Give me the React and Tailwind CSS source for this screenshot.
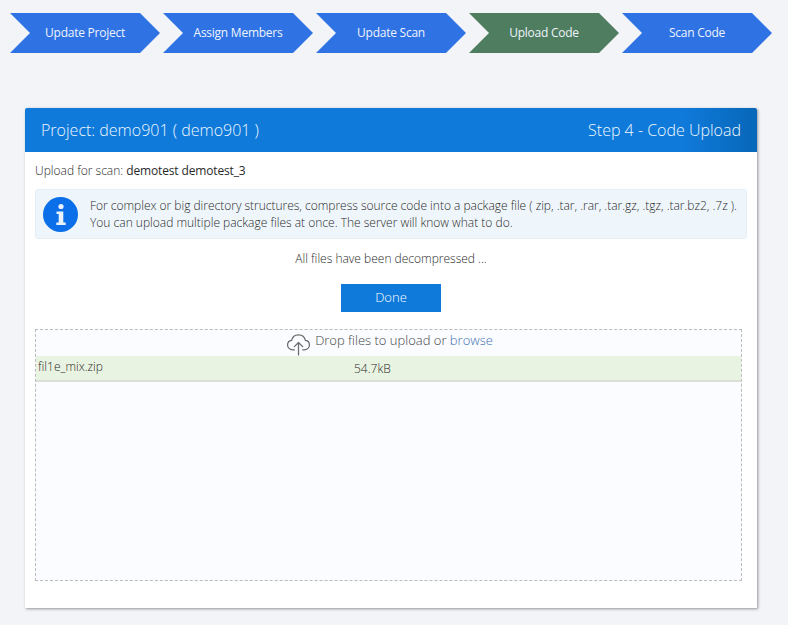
const steps = [
    { name: "Update Project", active: false },
    { name: "Assign Members", active: false },
    { name: "Update Scan", active: false },
    { name: "Upload Code", active: true },
    { name: "Scan Code", active: false },
];

function CloudUpload() {
    return (
        <svg width="25" height="25" viewBox="0 0 24 24" fill="none" stroke="#6b6b6b" strokeWidth="1.2" strokeLinecap="round" strokeLinejoin="round" className="mt-[1px] shrink-0">
            <path d="M8 18H6.500C3.600 18 1.500 16 1.500 13.500c0-2.300 1.700-4.100 3.900-4.400C6 5.900 8.600 3.600 12 3.600c3.300 0 6 2.300 6.600 5.500 2.200.3 3.900 2.100 3.900 4.400 0 2.500-2.100 4.500-5 4.500H16" />
            <path d="M12 23V11M8 15l4-4 4 4" />
        </svg>
    );
}

function InfoIcon() {
    return (
        <svg width="35" height="35" viewBox="0 0 35 35" className="shrink-0">
            <circle cx="17.500" cy="17.500" r="17.500" fill="#0a6fe8" />
            <circle cx="18" cy="9.500" r="2.600" fill="#eaf3fd" />
            <path d="M13.500 14.500h6.800v11h2.400v2.500h-9.400v-2.500h2.400v-8.500h-2.200z" fill="#eaf3fd" />
        </svg>
    );
}

export default function App() {
    return (
        <div className="h-[625px] w-[788px] overflow-hidden bg-[#f3f4f8] font-['Open_Sans',sans-serif] text-[12px] font-light text-[#2a2a2a]">
            <div className="flex gap-[3px] pl-[10px] pt-[13px]">
                {steps.map((step) => (
                    <div
                        key={step.name}
                        className={`flex h-[40px] w-[150px] items-center justify-center text-[12px] font-normal tracking-[-0.25px] text-[#eef4fc] [clip-path:polygon(0_0,130px_0,150px_20px,130px_40px,0_40px,20px_20px)] ${
                            step.active ? "bg-[#4f7d5f]" : "bg-[#2f72e4]"
                        }`}
                    >
                        {step.name}
                    </div>
                ))}
            </div>

            <div className="ml-[25px] mt-[55px] h-[500px] w-[732px] rounded-t-[2px] bg-white shadow-[1px_1px_3px_rgba(0,0,0,0.4)]">
                <div className="flex h-[44px] items-center justify-between rounded-t-[2px] bg-[linear-gradient(90deg,#0f7ada_0%,#0f7ada_90%,#0767b8_100%)] px-[16px] text-[16px] text-[#eef7ff]">
                    <span>Project: demo901 ( demo901 )</span>
                    <span>Step 4 - Code Upload</span>
                </div>

                <div className="px-[10px]">
                    <div className="flex h-[37px] items-center whitespace-pre">
                        Upload for scan: <span className="font-normal tracking-[-0.15px]">demotest demotest_3</span>
                    </div>

                    <div className="flex h-[50px] items-center gap-[12px] rounded-[3px] border border-[#e6eff6] bg-[#eff6fb] pl-[7px] leading-[17px]">
                        <InfoIcon />
                        <div className="whitespace-nowrap">
                            <div className="tracking-[-0.015px]">For complex or big directory structures, compress source code into a package file ( zip, .tar, .rar, .tar.gz, .tgz, .tar.bz2, .7z ).</div>
                            <div>You can upload multiple package files at once. The server will know what to do.</div>
                        </div>
                    </div>

                    <div className="mt-[11px] text-center leading-[17px]">All files have been decompressed ...</div>

                    <div className="mt-[17px] flex justify-center">
                        <button className="h-[28px] w-[100px] bg-[#0f7ada] text-[13px] text-white">Done</button>
                    </div>

                    <div className="mt-[17px] h-[252px] w-[707px] border border-dashed border-[#bbb] bg-[#fbfcff]">
                        <div className="flex h-[26px] items-start justify-center gap-[4px] pl-[2px] text-[13px] leading-[20px] text-[#444]">
                            <CloudUpload />
                            <span>
                                Drop files to upload or <span className="text-[#3f6fb0]">browse</span>
                            </span>
                        </div>
                        <div className="flex h-[26px] items-center border-b-2 border-[#dcdfd8] bg-[#e9f3e1]">
                            <div className="mb-[2px] w-[318px] pl-[2px]">fil1e_mix.zip</div>
                            <div className="mt-[2px]">54.7kB</div>
                        </div>
                    </div>
                </div>
            </div>
        </div>
    );
}
